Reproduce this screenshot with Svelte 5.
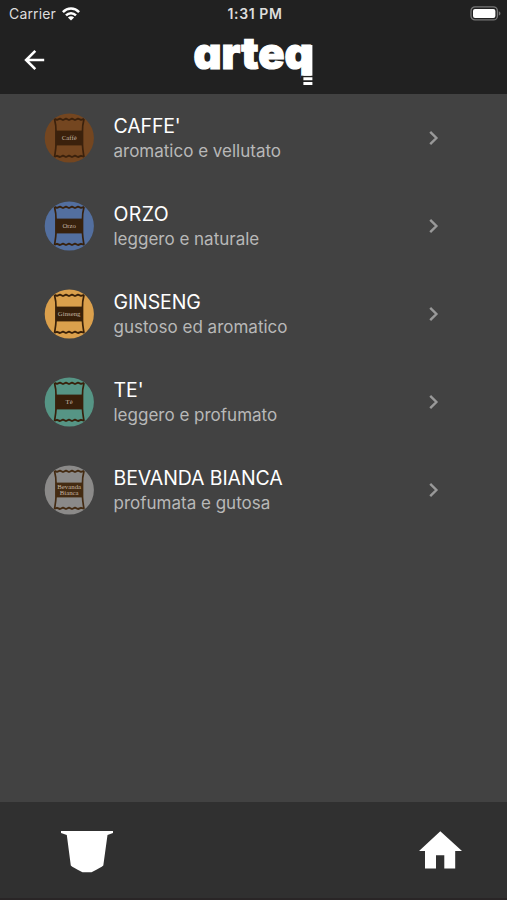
<script>
  const drinks = [
    { name: "CAFFE'", note: 'aromatico e vellutato', color: '#744620', ink: '#3b210c', lines: ['Caffè'], gap: -0.15 },
    { name: 'ORZO', note: 'leggero e naturale', color: '#536f9f', ink: '#37210d', lines: ['Orzo'], gap: 0.4 },
    { name: 'GINSENG', note: 'gustoso ed aromatico', color: '#dba04c', ink: '#382009', lines: ['Ginseng'], gap: -0.1 },
    { name: "TE'", note: 'leggero e profumato', color: '#569585', ink: '#38200b', lines: ['Tè'], gap: 0 },
    { name: 'BEVANDA BIANCA', note: 'profumata e gutosa', color: '#8b8a89', ink: '#442b12', lines: ['Bevanda', 'Bianca'], gap: -0.1 }
  ]
</script>

<div class="screen">
  <header>
    <div class="status">
      <div class="carrier">
        <span>Carrier</span>
        <svg width="18" height="14" viewBox="0 0 18 14" aria-hidden="true">
          <g fill="none" stroke="#fff" stroke-width="2.5">
            <path d="M0.9 5.1C5.5 0.4 12.5 0.4 17.1 5.1" />
            <path d="M4 8.3C6.9 5.4 11.1 5.4 14 8.3" />
          </g>
          <path d="M5.9 10.4C7.7 8.8 10.3 8.8 12.1 10.4L9 13.6Z" fill="#fff" />
        </svg>
      </div>
      <span class="time">1:31 PM</span>
      <svg class="battery" width="31" height="15" viewBox="0 0 31 15" aria-hidden="true">
        <rect x="1" y="0.9" width="26.4" height="13" rx="4" fill="none" stroke="#777" stroke-width="1.3" />
        <rect x="3" y="2.9" width="22.4" height="9" rx="2" fill="#fff" />
        <path d="M28.8 5.2C31 6 31 8.8 28.8 9.6Z" fill="#777" />
      </svg>
    </div>
    <div class="bar">
      <button type="button" aria-label="Indietro">
        <svg width="22" height="22" viewBox="0 0 22 22" fill="none" stroke="#fff" stroke-width="2.6" aria-hidden="true">
          <path d="M20.2 11H2.6M11.3 1.8L2.1 11L11.3 20.2" />
        </svg>
      </button>
      <svg class="logo" width="126" height="67" viewBox="0 0 126 67" aria-label="arteq">
        <text x="2.5" y="42" textLength="119" lengthAdjust="spacingAndGlyphs">arteq</text>
        <path d="M110 48.7H126V67H110Z" fill="#212121" />
        <path d="M112.4 18H121.4V48.7H112.4ZM112.4 50.3H121.4V53.2H112.4ZM112.4 55H121.4V58H112.4Z" fill="#fff" />
      </svg>
    </div>
  </header>

  <main>
    {#each drinks as drink}
      <div class="row">
        <svg class="avatar" width="50" height="50" viewBox="0 0 50 50" style:--ink={drink.ink} aria-hidden="true">
          <circle cx="25.3" cy="25" r="24.6" fill={drink.color} />
          <path class="side" d="M10.5 6C12 12 12.2 13 12 18V32C11.8 37 11.5 38 10.5 44" />
          <path class="side" d="M40 6C38.5 12 38.3 13 38.5 18V32C38.7 37 39 38 40 44" />
          <path class="hem" d="M10.5 6L13 6.8L16 5.6L19 7L22 5.6L25 7L28 5.6L31 7L34 5.6L37 6.8L40 6" />
          <path class="hem" d="M10.5 43.6L13 42.8L16 44L19 42.6L22 44L25 42.6L28 44L31 42.6L34 44L37 42.8L40 43.6" />
          <rect x="11.5" y="17.6" width="27.5" height="14.8" fill={drink.ink} />
          {#each drink.lines as line, i}
            <text x="25.2" y={drink.lines.length > 1 ? 24.2 + i * 5.8 : 27}>{line}</text>
          {/each}
        </svg>
        <div class="text">
          <div class="name" style:letter-spacing="{drink.gap}px">{drink.name}</div>
          <div class="note">{drink.note}</div>
        </div>
        <svg class="chevron" width="12" height="18" viewBox="0 0 12 18" aria-hidden="true">
          <path d="M2.2 2.8L8.4 9L2.2 15.2" />
        </svg>
      </div>
    {/each}
  </main>

  <footer>
    <svg width="52" height="42" viewBox="0 0 52 42" aria-hidden="true">
      <path d="M0 0H52V2L46.5 4L42.3 34.5Q40 36.5 31.5 40.7Q30.5 41.2 29.5 41.2H22.5Q21.5 41.2 20.5 40.7Q12 36.5 9.8 34.5L5.8 4L0 2Z" fill="#fff" />
    </svg>
    <svg width="43" height="38" viewBox="0 0 43 38" aria-hidden="true">
      <path d="M21.3 0.3L43 20H36.2V37.6H25.3V24.2H17V37.6H6V20H0Z" fill="#fff" />
    </svg>
  </footer>
</div>

<style>
  :global(body) {
    background: #424242;
  }

  .screen {
    display: flex;
    flex-direction: column;
    width: 507px;
    height: 900px;
    background: #424242;
    color: #fff;
    font-family: Inter, 'Liberation Sans', sans-serif;
  }

  header {
    height: 94px;
    background: #212121;
  }

  .status {
    display: grid;
    grid-template-columns: 1fr auto 1fr;
    align-items: center;
    height: 27px;
    padding: 0 6px 0 9px;
    font-size: 14px;
    color: #ddd;
  }

  .carrier {
    display: flex;
    align-items: center;
    gap: 6px;
    letter-spacing: 0.15px;
  }

  .time {
    font-weight: 600;
    font-size: 14px;
    letter-spacing: 0.6px;
  }

  .battery {
    justify-self: end;
  }

  .bar {
    display: flex;
    align-items: flex-start;
    padding-left: 24px;
  }

  button {
    display: block;
    margin: 22px 145px 0 0;
    padding: 0;
    border: 0;
    background: none;
  }

  button svg,
  .logo {
    display: block;
  }

  .logo text {
    fill: #fff;
    stroke: #fff;
    stroke-width: 1.2;
    font-size: 43.5px;
    font-weight: 900;
    font-feature-settings: 'cv11';
  }

  main {
    flex: 1;
  }

  .row {
    display: flex;
    align-items: center;
    height: 88px;
    padding: 0 67px 0 44px;
  }

  .avatar {
    margin-right: 19.5px;
  }

  .side,
  .hem {
    fill: none;
    stroke: var(--ink);
    stroke-width: 1.7;
    stroke-linejoin: round;
  }

  .hem {
    stroke-width: 1.9;
  }

  .avatar text {
    fill: #c3b5a3;
    font-family: 'Liberation Serif', serif;
    font-size: 6.8px;
    text-anchor: middle;
  }

  .text {
    flex: 1;
  }

  .name {
    font-size: 19.5px;
    line-height: 26px;
  }

  .note {
    font-size: 17px;
    line-height: 25px;
    color: #b8b8b8;
  }

  .chevron path {
    fill: none;
    stroke: #999;
    stroke-width: 2.4;
  }

  footer {
    display: flex;
    align-items: flex-start;
    justify-content: space-between;
    box-sizing: border-box;
    height: 98px;
    padding: 29px 45px 0 61px;
    border-bottom: 2px solid #292526;
    background: #303030;
  }
</style>
